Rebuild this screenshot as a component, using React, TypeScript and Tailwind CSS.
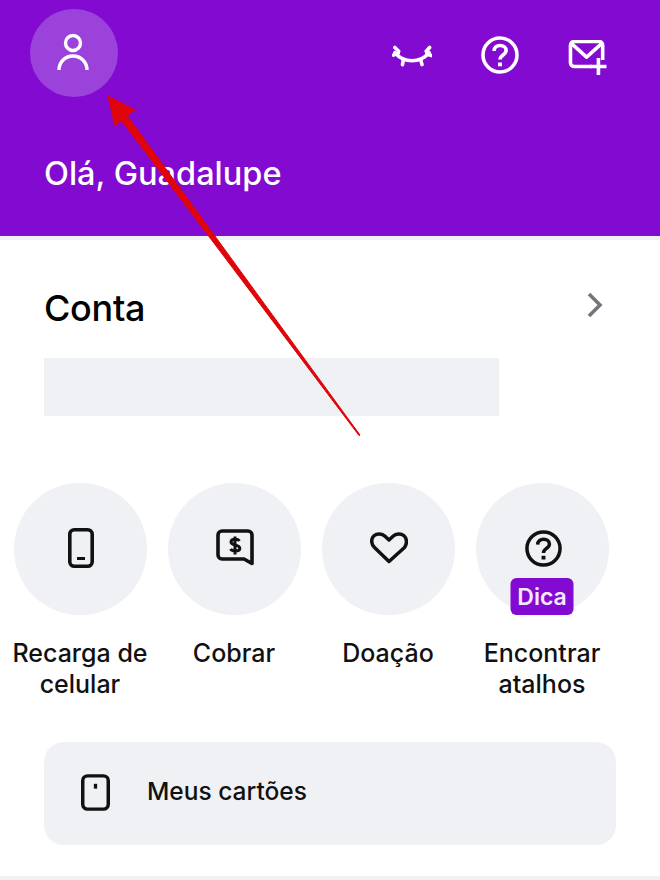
import type { ReactNode } from "react";

const font = { fontFamily: "Inter, 'Noto Sans', sans-serif" };

function PhoneIcon() {
  return (
    <svg width="26" height="40" viewBox="0 0 26 40" fill="none" stroke="#111" strokeWidth="3.600">
      <rect x="1.800" y="1.800" width="22.400" height="36.400" rx="4.500" />
      <path d="M9 30.500h8" strokeWidth="3" />
    </svg>
  );
}

function ChargeIcon() {
  return (
    <svg width="38" height="38" viewBox="0 0 38 38" fill="none" stroke="#111" strokeWidth="3.600">
      <path d="M6 2h26a4 4 0 0 1 4 4v28.500l-8-4.500H6a4 4 0 0 1-4-4V6a4 4 0 0 1 4-4z" strokeLinejoin="round" />
      <path d="M23.500 12c-.8-1.200-2.300-1.800-4.300-1.800-2.500 0-4.200 1-4.200 2.800 0 4.200 8.800 2 8.800 6.200 0 1.900-1.900 2.900-4.500 2.900-2.200 0-3.900-.7-4.800-2.100M19 7.500v18" strokeWidth="3" />
    </svg>
  );
}

function HeartIcon() {
  return (
    <svg width="38" height="32" viewBox="0 0 38 32" fill="none" stroke="#111" strokeWidth="3.500" strokeLinejoin="round">
      <path d="M19 29.500 4.500 15.500C.8 11.800.9 6.600 4 3.800c3.200-2.800 8-2.400 11 .5L19 8l4-3.700c3-2.900 7.800-3.300 11-.5 3.100 2.800 3.200 8 .5 11.700z" />
    </svg>
  );
}

function HelpIcon({ color, size }: { color: string; size: number }) {
  return (
    <svg width={size} height={size} viewBox="0 0 38 38" fill="none" stroke={color} strokeWidth="3.600">
      <circle cx="19" cy="19" r="17" />
      <path d="M13 15c.2-3.500 2.700-5.500 6.100-5.500 3.500 0 6 2 6 4.900 0 4.600-6.100 4.500-6.100 9.100" strokeWidth="3.600" />
      <path d="M19 26.500v3.800" strokeWidth="4" />
    </svg>
  );
}

function ClosedEye() {
  return (
    <svg className="mt-[3px]" width="40" height="28" viewBox="0 0 42 28" fill="none" stroke="#fff" strokeWidth="3.800" strokeLinecap="round">
      <path d="M3 9.500c5 6 11 8.500 18 8.500s13-2.500 18-8.500" />
      <path d="M3 4 7 8M1.500 12l5-2M36 8l3.500-4M36.500 11l5 1.500M12 16.500 11 22M30 16.500l1.500 5.500" />
    </svg>
  );
}

function MailPlus() {
  return (
    <svg className="mt-[6px]" width="40" height="36" viewBox="0 0 40 38" fill="none" stroke="#fff" strokeWidth="3.800">
      <path d="M24 28H5.500a4 4 0 0 1-4-4V5.500a4 4 0 0 1 4-4h26a4 4 0 0 1 4 4V21" strokeLinejoin="round" />
      <path d="m3 4 15.500 14L34 4" strokeLinejoin="round" />
      <path d="M31 19v18M22.500 28h17" />
    </svg>
  );
}

function Shortcut({ label, icon, badge }: { label: ReactNode; icon: ReactNode; badge?: boolean }) {
  return (
    <div className="flex w-[154px] flex-col items-center">
      <div className="relative flex h-[132px] w-[133px] items-center justify-center rounded-full bg-[#f0f1f5]">
        <div className="mb-[2px] ml-[2px]">{icon}</div>
        {badge && (
          <span className="absolute bottom-0 left-1/2 flex h-[37px] w-[63px] -translate-x-1/2 items-center justify-center rounded-[6px] bg-[#820ad1] pt-[2px] text-[23px] font-semibold text-[#f5e9fc]">
            Dica
          </span>
        )}
      </div>
      <p className="mt-[23px] whitespace-nowrap text-center text-[25px] font-[450] leading-[31px] text-[#111]">{label}</p>
    </div>
  );
}

export default function App() {
  return (
    <div className="relative h-[880px] w-[660px] overflow-hidden bg-white" style={font}>
      <header className="h-[236px] bg-[#820ad1] pl-[30px] pr-[52px] pt-[9px]">
        <div className="flex items-start justify-between">
          <div className="flex h-[88px] w-[88px] items-center justify-center rounded-full bg-[#9b42da]">
            <svg className="mr-[2px]" width="32" height="40" viewBox="0 0 32 40" fill="none" stroke="#fff" strokeWidth="3.400">
              <circle cx="16" cy="10" r="7.500" />
              <path d="M2 37c0-8 6.200-14 14-14s14 6 14 14" />
            </svg>
          </div>
          <div className="mt-[25px] flex items-center gap-[49px]">
            <ClosedEye />
            <HelpIcon color="#fff" size={38} />
            <MailPlus />
          </div>
        </div>
        <h1 className="ml-[14px] mt-[57px] text-[32.500px] font-medium leading-[40px] text-white">Olá, Guadalupe</h1>
      </header>
      <div className="h-[4px] bg-[#f0f1f5]" />

      <section className="px-[44px] pt-[46px]">
        <div className="flex items-center justify-between pr-[13px]">
          <h2 className="text-[36px] font-medium leading-[44px] tracking-[-0.3px] text-black">Conta</h2>
          <svg className="mb-[6px]" width="16" height="26" viewBox="0 0 16 26" fill="none" stroke="#74757a" strokeWidth="3.600">
            <path d="m2 2 11 11L2 24" />
          </svg>
        </div>
        <div className="mt-[28px] h-[58px] w-[455px] bg-[#f0f1f5]" />
      </section>

      <section className="mt-[67px] flex pl-[3px]">
        <Shortcut label={<>Recarga de<br />celular</>} icon={<PhoneIcon />} />
        <Shortcut label="Cobrar" icon={<ChargeIcon />} />
        <Shortcut label="Doação" icon={<HeartIcon />} />
        <Shortcut label={<>Encontrar<br />atalhos</>} icon={<HelpIcon color="#111" size={37} />} badge />
      </section>

      <div className="mx-[44px] mt-[42px] flex h-[103px] items-center rounded-[20px] bg-[#f0f1f5] pb-[2px] pl-[37px]">
        <svg width="29" height="37" viewBox="0 0 30 38" fill="none" stroke="#111" strokeWidth="3.600">
          <rect x="1.800" y="1.800" width="26.400" height="34.400" rx="5" />
          <path d="M15 10v5" strokeWidth="3.400" />
        </svg>
        <span className="mb-[2px] ml-[37px] text-[24.500px] font-medium text-[#111]">Meus cartões</span>
      </div>

      <div className="absolute inset-x-0 bottom-0 h-[4px] bg-[#f0f1f5]" />

      {/* annotation arrow drawn over the screenshot */}
      <svg className="pointer-events-none absolute left-0 top-0" width="660" height="880" viewBox="0 0 660 880">
        <path d="M360 435 127 115.500 135 110 108 96 115 126 121.500 120.500 359 435.500z" fill="#e0040b" stroke="#e0040b" strokeWidth="1" strokeLinejoin="round" />
      </svg>
    </div>
  );
}
